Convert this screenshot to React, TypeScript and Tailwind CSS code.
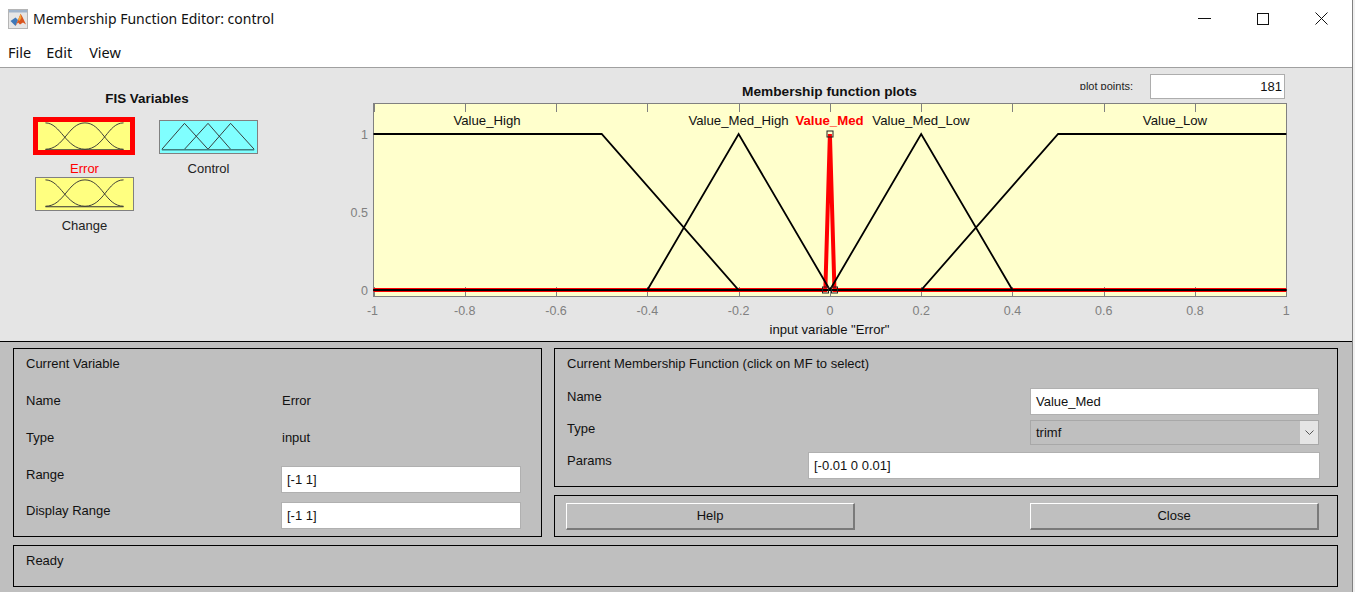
import React from 'react';

const xTicks = [-1, -0.8, -0.6, -0.4, -0.2, 0, 0.2, 0.4, 0.6, 0.8, 1];

// plot coordinates, svg sits at x=340 y=99 on the page
const px = (v: number) => 489.9 + 456.4 * v;
const ZERO = 191;
const ONE = 35;

const mfs = [
  { name: 'Value_High', at: 147, pts: [[-1, 1], [-0.5, 1], [-0.2, 0], [1, 0]] },
  { name: 'Value_Med_High', at: 398.5, pts: [[-1, 0], [-0.4, 0], [-0.2, 1], [0, 0], [1, 0]] },
  { name: 'Value_Med_Low', at: 581, pts: [[-1, 0], [0, 0], [0.2, 1], [0.4, 0], [1, 0]] },
  { name: 'Value_Low', at: 835, pts: [[-1, 0], [0.2, 0], [0.5, 1], [1, 1]] },
];

const toPoints = (pts: number[][]) =>
  pts.map(([x, y]) => `${px(x)},${y === 1 ? ONE : ZERO}`).join(' ');

const MembershipPlot = () => (
  <svg width={960} height={242} viewBox="0 0 960 242" className="block">
    <rect x={33.5} y={4.5} width={913} height={193} fill="#ffffcc" stroke="#808080" />
    {xTicks.map((t) => (
      <g key={t}>
        <path d={`M${Math.round(px(t)) + 0.5} 4v9M${Math.round(px(t)) + 0.5} 197v-9`} stroke="#808080" fill="none" />
        <text x={px(t) + (t === -1 ? -1 : 0)} y={216} textAnchor="middle" fontSize={12.5} fill="#808080">
          {t}
        </text>
      </g>
    ))}
    <text x={28} y={40} textAnchor="end" fontSize={12.5} fill="#808080">1</text>
    <text x={28} y={118} textAnchor="end" fontSize={12.5} fill="#808080">0.5</text>
    <text x={28} y={196} textAnchor="end" fontSize={12.5} fill="#808080">0</text>

    <polyline
      points={toPoints([[-1, 0], [-0.01, 0], [0, 1], [0.01, 0], [1, 0]])}
      fill="none"
      stroke="#ff0000"
      strokeWidth={4}
    />
    {mfs.map((m) => (
      <g key={m.name}>
        <polyline points={toPoints(m.pts)} fill="none" stroke="#000000" strokeWidth={1.8} />
        <text x={m.at} y={25.5} textAnchor="middle" fontSize={13.2} fill="#111111">
          {m.name}
        </text>
      </g>
    ))}
    <text x={489.5} y={25.5} textAnchor="middle" fontSize={13.2} fontWeight={700} fill="#ff0000">
      Value_Med
    </text>
    <rect x={487} y={32} width={6} height={6} fill="none" stroke="#222222" />
    <rect x={482.5} y={188} width={6} height={6} fill="none" stroke="#222222" />
    <rect x={491.5} y={188} width={6} height={6} fill="none" stroke="#222222" />

    <text x={489.5} y={235} textAnchor="middle" fontSize={13.1} fill="#111111">
      input variable "Error"
    </text>
  </svg>
);

const BellIcon = () => (
  <svg width={99} height={34} viewBox="0 0 99 34" className="block bg-[#ffff80] border border-[#808080]">
    <g fill="none" stroke="#333333" strokeWidth={1}>
      <path d="M8 2C24 2 30 30 50 30" />
      <path d="M8 30C28 30 32 2 50 2C68 2 72 30 91 30" />
      <path d="M50 30C70 30 74 2 91 2" />
      <path d="M8 30.5H91" strokeWidth={1.2} />
    </g>
  </svg>
);

const TriangleIcon = () => (
  <svg width={99} height={34} viewBox="0 0 99 34" className="block bg-[#80ffff] border border-[#808080]">
    <g fill="none" stroke="#333333" strokeWidth={1}>
      <path d="M0 30L24 2.5L49 30" />
      <path d="M24 30L49 2.5L73 30" />
      <path d="M49 30L73 2.5L98 30" />
      <path d="M0 30.5H98" stroke="#3d7f80" strokeWidth={1.6} />
    </g>
  </svg>
);

const MatlabLogo = () => (
  <svg width={20} height={20} viewBox="0 0 20 20" className="block">
    <rect x={0.5} y={0.5} width={19} height={19} fill="#e6e6e6" stroke="#b5b5b5" />
    <rect x={1} y={1} width={18} height={2.5} fill="#9fb4cc" />
    <path d="M2.5 12L7.5 8.5L10 11L7.5 17Z" fill="#3f78b8" />
    <path d="M7.5 17L10 11L12.6 4.7L14.5 8L18 15.5L15 13.5L12 15.5L10 13.5Z" fill="#d9541e" />
    <path d="M10 11L12.6 4.7L13.5 9L11.5 12Z" fill="#f2a63a" />
  </svg>
);

const TextField = ({ value, className }: { value: string; className: string }) => (
  <div className={`h-[27px] bg-white border border-[#b0b0b0] pl-[5px] flex items-center pt-px text-[#111] ${className}`}>
    {value}
  </div>
);

const PushButton = ({ label }: { label: string }) => (
  <div className="w-[289px] h-[27px] border-t border-l border-b-2 border-r-2 border-t-white border-l-white border-b-[#7a7a7a] border-r-[#7a7a7a] flex items-center justify-center">
    {label}
  </div>
);

export default function App() {
  return (
    <div className="w-[1355px] h-[592px] overflow-hidden flex bg-[#f0f0f0] font-['Liberation_Sans',Arial,sans-serif]">
      <div className="w-[1353px] h-full flex flex-col border-r border-[#808080] shrink-0">
        <div className="h-[34px] bg-white flex items-center pl-[8px] pt-[3px]">
          <MatlabLogo />
          <span className="ml-[5px] text-[14px] text-[#111] font-['Noto_Sans',sans-serif]">
            Membership Function Editor: control
          </span>
          <div className="ml-auto flex pr-[1px]">
            <div className="w-[58.5px] h-[20px] flex items-center justify-center">
              <svg width={13} height={13} viewBox="0 0 13 13"><path d="M0 6.5H13" stroke="#111" /></svg>
            </div>
            <div className="w-[58.5px] h-[20px] flex items-center justify-center">
              <svg width={12} height={12} viewBox="0 0 12 12"><rect x={0.5} y={0.5} width={11} height={11} fill="none" stroke="#111" /></svg>
            </div>
            <div className="w-[58.5px] h-[20px] flex items-center justify-center">
              <svg width={13} height={13} viewBox="0 0 13 13"><path d="M0.5 0.5L12.5 12.5M12.5 0.5L0.5 12.5" stroke="#111" fill="none" /></svg>
            </div>
          </div>
        </div>

        <div className="h-[34px] bg-white border-b border-[#a0a0a0] flex items-center gap-[15px] pl-[8px] pt-[4px] text-[14.5px] text-[#111] font-['Noto_Sans',sans-serif]">
          <span>File</span>
          <span>Edit</span>
          <span className="ml-[2px]">View</span>
        </div>

        <div className="h-[274px] bg-[#e5e5e5] border-b border-black flex shrink-0">
          <div className="w-[340px] shrink-0 pl-[35px] pt-[24px]">
            <div className="w-[224px] text-center text-[13.4px] font-bold leading-[14px] text-[#111]">FIS Variables</div>
            <div className="mt-[14px] grid grid-cols-[99px_99px] gap-x-[25px] text-[13px] leading-[14px] text-center text-[#222]">
              <div>
                <div className="relative">
                  <BellIcon />
                  <div className="absolute -left-[2px] -top-[3px] w-[102px] h-[38px] border-[5px] border-[#ff0000]" />
                </div>
                <div className="mt-[8px] text-[#ff0000]">Error</div>
              </div>
              <div>
                <TriangleIcon />
                <div className="mt-[8px]">Control</div>
              </div>
              <div className="mt-[1px]">
                <BellIcon />
                <div className="mt-[8px]">Change</div>
              </div>
            </div>
          </div>

          <div className="w-[960px] shrink-0 pt-[6px]">
            <div className="h-[25px] flex pl-[402px]">
              <div className="self-end text-[13.7px] font-bold leading-[14px] text-[#111]">Membership function plots</div>
              <div className="ml-auto mt-[7px] h-[9px] overflow-hidden text-[11px] leading-[11px] text-[#222] mr-[17px]">plot points:</div>
              <div className="w-[135px] h-[25px] bg-white border border-[#adadad] text-right pr-[2px] pt-[4px] text-[13px] leading-[16px] text-[#111] mr-[15px]">
                181
              </div>
            </div>
            <MembershipPlot />
          </div>
        </div>

        <div className="flex-1 bg-[#bfbfbf] pl-[13px] pt-[6px] text-[13px] leading-[14px] text-[#111]">
          <div className="grid grid-cols-[529px_784px] gap-x-[12px] gap-y-[8px]">
            <div className="h-[189px] border border-black pl-[12px] pt-[8px] row-span-2">
              <div className="h-[37px]">Current Variable</div>
              <div className="grid grid-cols-[255px_240px] grid-rows-[37px_37px_36px_33px]">
                <div>Name</div>
                <div className="pl-[1px]">Error</div>
                <div>Type</div>
                <div className="pl-[1px]">input</div>
                <div>Range</div>
                <TextField value="[-1 1]" className="-mt-[2px]" />
                <div>Display Range</div>
                <TextField value="[-1 1]" className="-mt-[2px]" />
              </div>
            </div>

            <div className="h-[139px] border border-black pl-[12px] pr-[18px] pt-[8px]">
              <div className="h-[33px]">Current Membership Function (click on MF to select)</div>
              <div className="h-[32px] flex justify-between">
                <div>Name</div>
                <TextField value="Value_Med" className="w-[289px] -mt-[2px]" />
              </div>
              <div className="h-[32px] flex justify-between">
                <div>Type</div>
                <div className="w-[289px] h-[25px] -mt-[2px] border border-[#a8a8a8] flex items-center justify-between pl-[5px]">
                  <span>trimf</span>
                  <div className="w-[18px] h-full bg-[#e5e5e5] flex items-center justify-center">
                    <svg width={9} height={6} viewBox="0 0 9 6"><path d="M0.5 0.5L4.5 4.5L8.5 0.5" fill="none" stroke="#555" /></svg>
                  </div>
                </div>
              </div>
              <div className="flex justify-between">
                <div>Params</div>
                <TextField value="[-0.01 0 0.01]" className="w-[512px] -mt-[2px] -mr-px" />
              </div>
            </div>

            <div className="h-[42px] border border-black pl-[11px] pr-[18px] flex items-center justify-between">
              <PushButton label="Help" />
              <PushButton label="Close" />
            </div>

            <div className="col-span-2 h-[42px] border border-black pl-[12px] pt-[8px]">Ready</div>
          </div>
        </div>
      </div>
    </div>
  );
}
